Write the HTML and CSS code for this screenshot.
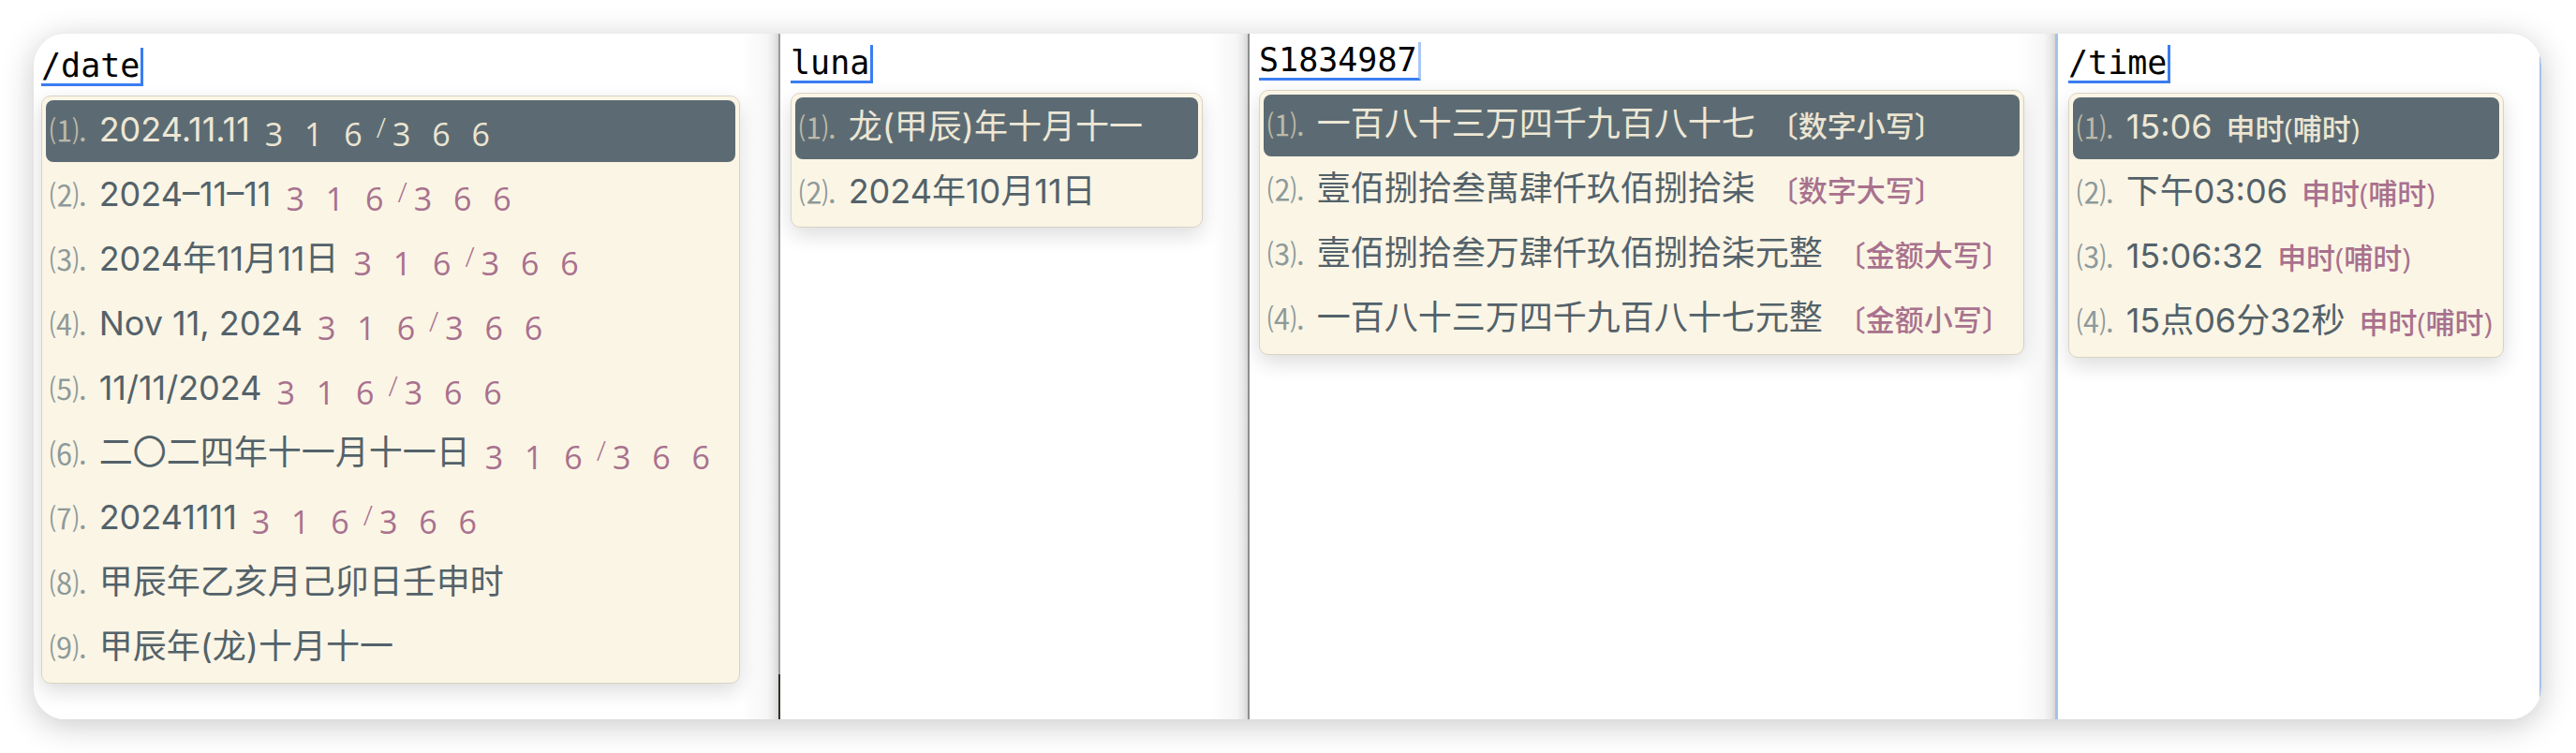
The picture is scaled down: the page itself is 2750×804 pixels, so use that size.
FILE: index.html
```html
<!DOCTYPE html>
<html lang="zh-CN">
<head>
<meta charset="utf-8">
<title>Rime candidates</title>
<link rel="stylesheet" href="styles.css">
</head>
<body>
<div class="card">
  <section class="panel p1">
    <div class="input"><span class="typed">/date</span></div>
    <div class="menu">
      <div class="row sel"><span class="lab">⑴.</span><span class="txt">2024.11.11</span><span class="py">3 1 6<i>/</i>3 6 6</span></div>
      <div class="row"><span class="lab">⑵.</span><span class="txt">2024–11–11</span><span class="py">3 1 6<i>/</i>3 6 6</span></div>
      <div class="row"><span class="lab">⑶.</span><span class="txt">2024年11月11日</span><span class="py">3 1 6<i>/</i>3 6 6</span></div>
      <div class="row"><span class="lab">⑷.</span><span class="txt">Nov 11, 2024</span><span class="py">3 1 6<i>/</i>3 6 6</span></div>
      <div class="row"><span class="lab">⑸.</span><span class="txt">11/11/2024</span><span class="py">3 1 6<i>/</i>3 6 6</span></div>
      <div class="row"><span class="lab">⑹.</span><span class="txt">二〇二四年十一月十一日</span><span class="py">3 1 6<i>/</i>3 6 6</span></div>
      <div class="row"><span class="lab">⑺.</span><span class="txt">20241111</span><span class="py">3 1 6<i>/</i>3 6 6</span></div>
      <div class="row"><span class="lab">⑻.</span><span class="txt">甲辰年乙亥月己卯日壬申时</span></div>
      <div class="row"><span class="lab">⑼.</span><span class="txt">甲辰年(龙)十月十一</span></div>
    </div>
  </section>
  <section class="panel p2">
    <div class="input"><span class="typed">luna</span></div>
    <div class="menu">
      <div class="row sel"><span class="lab">⑴.</span><span class="txt">龙(甲辰)年十月十一</span></div>
      <div class="row"><span class="lab">⑵.</span><span class="txt">2024年10月11日</span></div>
    </div>
  </section>
  <section class="panel p3">
    <div class="input"><span class="typed light">S1834987</span></div>
    <div class="menu">
      <div class="row sel"><span class="lab">⑴.</span><span class="txt">一百八十三万四千九百八十七</span><span class="cm">〔数字小写〕</span></div>
      <div class="row"><span class="lab">⑵.</span><span class="txt">壹佰捌拾叁萬肆仟玖佰捌拾柒</span><span class="cm">〔数字大写〕</span></div>
      <div class="row"><span class="lab">⑶.</span><span class="txt">壹佰捌拾叁万肆仟玖佰捌拾柒元整</span><span class="cm">〔金额大写〕</span></div>
      <div class="row"><span class="lab">⑷.</span><span class="txt">一百八十三万四千九百八十七元整</span><span class="cm">〔金额小写〕</span></div>
    </div>
  </section>
  <section class="panel p4">
    <div class="input"><span class="typed">/time</span></div>
    <div class="menu">
      <div class="row sel"><span class="lab">⑴.</span><span class="txt">15:06</span><span class="cm">申时(哺时)</span></div>
      <div class="row"><span class="lab">⑵.</span><span class="txt">下午03:06</span><span class="cm">申时(哺时)</span></div>
      <div class="row"><span class="lab">⑶.</span><span class="txt">15:06:32</span><span class="cm">申时(哺时)</span></div>
      <div class="row"><span class="lab">⑷.</span><span class="txt">15点06分32秒</span><span class="cm">申时(哺时)</span></div>
    </div>
  </section>
</div>
</body>
</html>
```
FILE: styles.css
```css
html, body {
  margin: 0;
  background: #ffffff;
}
body {
  padding: 36px 0 0 36px;
  width: 2750px;
  height: 804px;
  box-sizing: border-box;
  overflow: hidden;
}
.card {
  width: 2677px;
  height: 732px;
  border-radius: 34px;
  background: #ffffff;
  box-shadow: 0 6px 34px rgba(0, 0, 0, 0.22);
  overflow: hidden;
  display: flex;
}
.panel {
  position: relative;
  box-sizing: border-box;
  height: 100%;
  background: #ffffff;
}
.panel.p1 { width: 795px; padding: 14px 0 0 8px; }
.panel.p2 { width: 501px; padding: 11px 0 0 11px; border-left: 2px solid #9a9a9a; }
.panel.p3 { width: 862px; padding: 8px 0 0 10px; border-left: 2px solid #8e8e8e; }
.panel.p4 { width: 519px; padding: 11px 0 0 11px; border-left: 3px solid #a6c1e6; border-right: 2px solid #a6c1e6; }

/* shaded right edge of the stitched windows */
.panel.p1::after,
.panel.p2::after,
.panel.p3::after {
  content: "";
  position: absolute;
  top: 0;
  right: 0;
  bottom: 0;
  width: 40px;
  background: linear-gradient(to right, rgba(0,0,0,0) 0%, rgba(0,0,0,0.035) 70%, rgba(0,0,0,0.09) 88%, rgba(0,0,0,0.16) 100%);
  pointer-events: none;
}
.panel.p2::before {
  content: "";
  position: absolute;
  left: -2px;
  bottom: 0;
  width: 2px;
  height: 48px;
  background: #2b3326;
}

.input {
  height: 41px;
  font-family: "DejaVu Sans Mono", monospace;
  font-size: 35px;
  color: #000000;
}
.typed {
  display: inline-block;
  line-height: 38px;
  border-bottom: 3px solid #3a7cf2;
  border-right: 3px solid #3a7cf2;
  padding-right: 1px;
}
.typed.light {
  border-right-color: #a9c6f6;
}

.menu {
  margin-top: 11px;
  background: #fbf5e5;
  border: 1px solid #d9d3c4;
  border-radius: 10px;
  box-shadow: 0 8px 22px rgba(0, 0, 0, 0.14);
  padding: 4px;
  display: flex;
  flex-direction: column;
  gap: 3px;
}
.p1 .menu { width: 746px; box-sizing: border-box; }
.p2 .menu { width: 440px; box-sizing: border-box; padding-bottom: 3px; }
.p3 .menu { width: 817px; box-sizing: border-box; }
.p4 .menu { width: 465px; box-sizing: border-box; }

.row {
  height: 66px;
  line-height: 62px;
  border-radius: 8px;
  padding-left: 4px;
  white-space: nowrap;
  color: #53626a;
  font-family: "Inter", "Noto Sans CJK SC", sans-serif;
  font-size: 36px;
}
.row.sel {
  background: #5c6b73;
  color: #ede7d5;
}
.lab {
  font-family: "Noto Sans CJK SC", sans-serif;
  font-size: 31px;
  color: #8d9a9b;
  margin-right: 13px;
}
.sel .lab {
  color: #bdb8a7;
}
.py {
  font-family: "Open Sans", sans-serif;
  font-size: 34px;
  letter-spacing: 7px;
  color: #a8718e;
  margin-left: 16px;
  position: relative;
  top: 5px;
}
.py i {
  font-style: normal;
  font-weight: 300;
  font-size: 30px;
  margin-left: 8px;
  position: relative;
  top: -9px;
}
.cm {
  font-family: "Open Sans", "Noto Sans CJK SC", sans-serif;
  font-size: 31px;
  font-weight: 500;
  color: #a8718e;
  margin-left: 15px;
  position: relative;
  top: 1px;
}
.sel .py,
.sel .cm {
  color: #ece5d2;
}
```
